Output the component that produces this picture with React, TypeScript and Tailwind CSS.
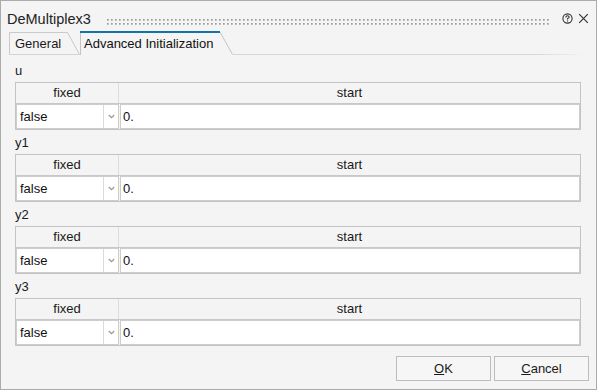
import React from "react";

const font = { fontFamily: '"Liberation Sans", Arial, sans-serif' };

function Section({ label }: { label: string }) {
  return (
    <div className="flex flex-col">
      <div className="h-[16px] leading-[16px] text-[13px] text-[#1a1a1a] mb-[3px]">{label}</div>
      <div className="flex flex-col border border-[#c3c3c3] bg-[#f4f4f4]">
        <div className="flex h-[21px] border-b border-[#c8c8c8] text-[13px] text-[#1a1a1a] leading-[20px]">
          <div className="w-[103px] border-r border-[#dcdcdc] text-center">fixed</div>
          <div className="flex-1 text-center">start</div>
        </div>
        <div className="flex h-[25px] text-[13px] text-[#111] leading-[23px]">
          <div className="flex w-[103px] border border-[#cdcdcd] bg-white">
            <div className="flex-1 pl-[3px]">false</div>
            <div className="flex w-[15px] items-center justify-center border-l border-[#dadada]">
              <svg width="7" height="5" viewBox="0 0 7 5">
                <path d="M0.8 1 L3.5 3.7 L6.2 1" fill="none" stroke="#9a9a9a" strokeWidth="1.3" />
              </svg>
            </div>
          </div>
          <div className="ml-px flex-1 border border-[#cdcdcd] bg-white pl-[2px]">0.</div>
        </div>
      </div>
    </div>
  );
}

export default function App() {
  return (
    <div style={font} className="flex h-[390px] w-[597px] flex-col border border-[#ababab] bg-[#f4f4f4]">
      {/* title bar */}
      <div className="flex h-[30px] items-start pt-[10px] pl-[6px]">
        <div className="text-[14.5px] leading-[17px] text-[#222]">DeMultiplex3</div>
        <div className="ml-[16px] mt-[8px]">
          <svg width="444" height="6" viewBox="0 0 444 6">
            <defs>
              <pattern id="dots" x="0" y="0" width="4" height="4" patternUnits="userSpaceOnUse">
                <rect x="0" y="0" width="1.7" height="1.7" fill="#9c9c9c" />
              </pattern>
            </defs>
            <rect x="0" y="0" width="444" height="6" fill="url(#dots)" />
          </svg>
        </div>
        <div className="ml-[11px] mt-[2px] flex items-center gap-[5px]">
          <svg width="11" height="11" viewBox="0 0 11 11">
            <circle cx="5.5" cy="5.5" r="4.6" fill="none" stroke="#333" strokeWidth="1.1" />
            <path d="M3.9 4.4 Q3.9 2.8 5.5 2.8 Q7.1 2.8 7.1 4.2 Q7.1 5 5.5 5.6 L5.5 6.6" fill="none" stroke="#333" strokeWidth="1.1" />
            <rect x="5" y="7.4" width="1.1" height="1.1" fill="#333" />
          </svg>
          <svg width="11" height="11" viewBox="0 0 11 11">
            <path d="M1.2 1.2 L9.8 9.8 M9.8 1.2 L1.2 9.8" stroke="#333" strokeWidth="1.2" />
          </svg>
        </div>
      </div>

      {/* tabs */}
      <div className="flex h-[24px] items-end pl-[8px]">
        <div className="relative h-[23px] w-[71px] text-[13px] text-[#1a1a1a]">
          <svg className="absolute left-0 top-0" width="72" height="23" viewBox="0 0 72 23">
            <polyline points="0.5,23 0.5,0.5 58.5,0.5 70.5,22.5" fill="none" stroke="#c9c9c9" strokeWidth="1" />
            <line x1="0" y1="22.5" x2="72" y2="22.5" stroke="#d4d4d4" strokeWidth="1" />
          </svg>
          <div className="relative pl-[6px] pt-[4px] leading-[16px]">General</div>
        </div>
        <div className="relative h-[24px] w-[153px] text-[13px] text-[#111]">
          <svg className="absolute left-0 top-0" width="153" height="24" viewBox="0 0 153 24">
            <polyline points="0.5,24 0.5,1 140,1 152.5,23.5" fill="none" stroke="#c4c4c4" strokeWidth="1" />
            <rect x="0" y="0" width="140" height="2" fill="#1473a8" />
          </svg>
          <div className="relative pl-[4px] pt-[5px] leading-[16px]">Advanced Initialization</div>
        </div>
        <div className="mr-[10px] h-px flex-1 bg-[linear-gradient(to_right,#d6d6d6_85%,transparent)]" />
      </div>

      {/* content */}
      <div className="flex flex-col gap-[5px] pl-[14px] pr-[15px] pt-[8px]">
        <Section label="u" />
        <Section label="y1" />
        <Section label="y2" />
        <Section label="y3" />
      </div>

      {/* footer */}
      <div className="flex justify-end gap-[3px] pr-[7px] pt-[10px]">
        <div className="flex h-[25px] w-[95px] items-center justify-center border border-[#bdbdbd] bg-[#f6f6f6] text-[13px] text-[#1a1a1a]">
          <span><span className="underline">O</span>K</span>
        </div>
        <div className="flex h-[25px] w-[95px] items-center justify-center border border-[#bdbdbd] bg-[#f6f6f6] text-[13px] text-[#1a1a1a]">
          <span><span className="underline">C</span>ancel</span>
        </div>
      </div>
    </div>
  );
}
